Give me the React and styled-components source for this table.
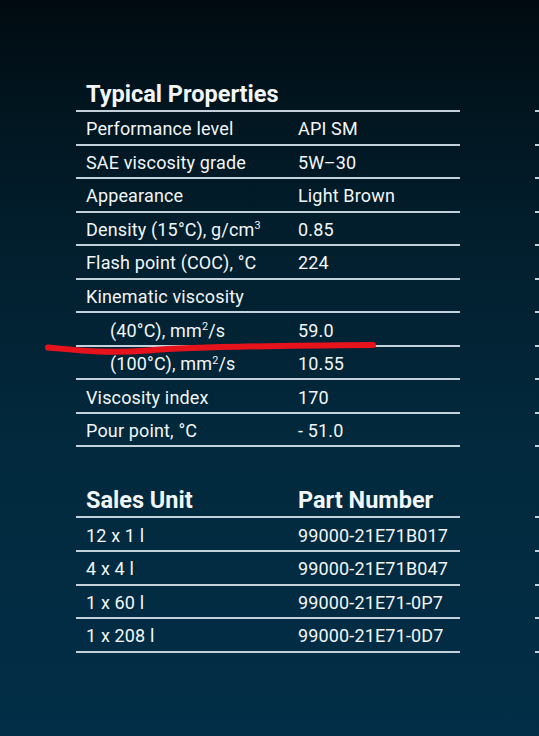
import React from "react";
import styled, { createGlobalStyle } from "styled-components";

const GlobalStyle = createGlobalStyle`
  html, body {
    margin: 0;
    padding: 0;
    background: #022c44;
  }
  body {
    font-family: Roboto, "Liberation Sans", sans-serif;
    color: #f3f6f8;
  }
`;

const Page = styled.div`
  position: relative;
  width: 539px;
  height: 736px;
  overflow: hidden;
  box-sizing: border-box;
  padding: 72px 0 0 76px;
  display: flex;
  gap: 75px;
  background: linear-gradient(
    180deg,
    #010a10 0%,
    #01151f 14%,
    #021f2e 34%,
    #02293d 60%,
    #022e47 100%
  );
`;

const Column = styled.div`
  width: 384px;
  flex-shrink: 0;
  display: flex;
  flex-direction: column;
`;

const Section = styled.section`
  margin-top: ${(p) => p.$gap || 0}px;
`;

const HeadRow = styled.div`
  display: grid;
  grid-template-columns: 212px 1fr;
  align-items: end;
  height: 40px;
  box-sizing: border-box;
  padding-bottom: 4px;
  border-bottom: 2px solid #c3d1da;
`;

const HeadCell = styled.div`
  padding-left: 10px;
  font-size: 23.5px;
  font-weight: 700;
  line-height: 1;
  white-space: nowrap;
`;

const Row = styled.div`
  display: grid;
  grid-template-columns: 212px 1fr;
  align-items: center;
  height: 33.55px;
  box-sizing: border-box;
  border-bottom: 2px solid #c3d1da;
`;

const Cell = styled.div`
  padding-left: ${(p) => (p.$indent ? 34 : 10)}px;
  padding-top: 3px;
  font-size: 18px;
  letter-spacing: 0.15px;
  line-height: 1;
  white-space: nowrap;
`;

const Sup = styled.span`
  font-size: 0.6em;
  position: relative;
  top: -0.6em;
`;

const Mark = styled.svg`
  position: absolute;
  left: 0;
  top: 0;
  pointer-events: none;
`;

const properties = [
  ["Performance level", "API SM"],
  ["SAE viscosity grade", "5W–30"],
  ["Appearance", "Light Brown"],
  [<>Density (15°C), g/cm<Sup>3</Sup></>, "0.85"],
  ["Flash point (COC), °C", "224"],
  ["Kinematic viscosity", ""],
  [<>(40°C), mm<Sup>2</Sup>/s</>, "59.0", true],
  [<>(100°C), mm<Sup>2</Sup>/s</>, "10.55", true],
  ["Viscosity index", "170"],
  ["Pour point, °C", "- 51.0"],
];

const units = [
  ["12 x 1 l", "99000-21E71B017"],
  ["4 x 4 l", "99000-21E71B047"],
  ["1 x 60 l", "99000-21E71-0P7"],
  ["1 x 208 l", "99000-21E71-0D7"],
];

function Table({ head, rows, gap }) {
  return (
    <Section $gap={gap}>
      <HeadRow>
        <HeadCell>{head[0]}</HeadCell>
        <HeadCell>{head[1]}</HeadCell>
      </HeadRow>
      {rows.map(([label, value, indent], i) => (
        <Row key={i}>
          <Cell $indent={indent}>{label}</Cell>
          <Cell>{value}</Cell>
        </Row>
      ))}
    </Section>
  );
}

const blank = (n) => Array.from({ length: n }, () => ["", ""]);

export default function App() {
  return (
    <>
      <GlobalStyle />
      <Page>
        <Column>
          <Table head={["Typical Properties", ""]} rows={properties} />
          <Table head={["Sales Unit", "Part Number"]} rows={units} gap={31} />
        </Column>
        <Column>
          <Table head={["", ""]} rows={blank(10)} />
          <Table head={["", ""]} rows={blank(4)} gap={31} />
        </Column>
        <Mark width="539" height="736" viewBox="0 0 539 736">
          <path
            d="M48 347.5 C 76 350, 104 354, 148 350.5 S 290 345.5, 373 345"
            fill="none"
            stroke="#e6121c"
            strokeWidth="6"
            strokeLinecap="round"
          />
        </Mark>
      </Page>
    </>
  );
}
